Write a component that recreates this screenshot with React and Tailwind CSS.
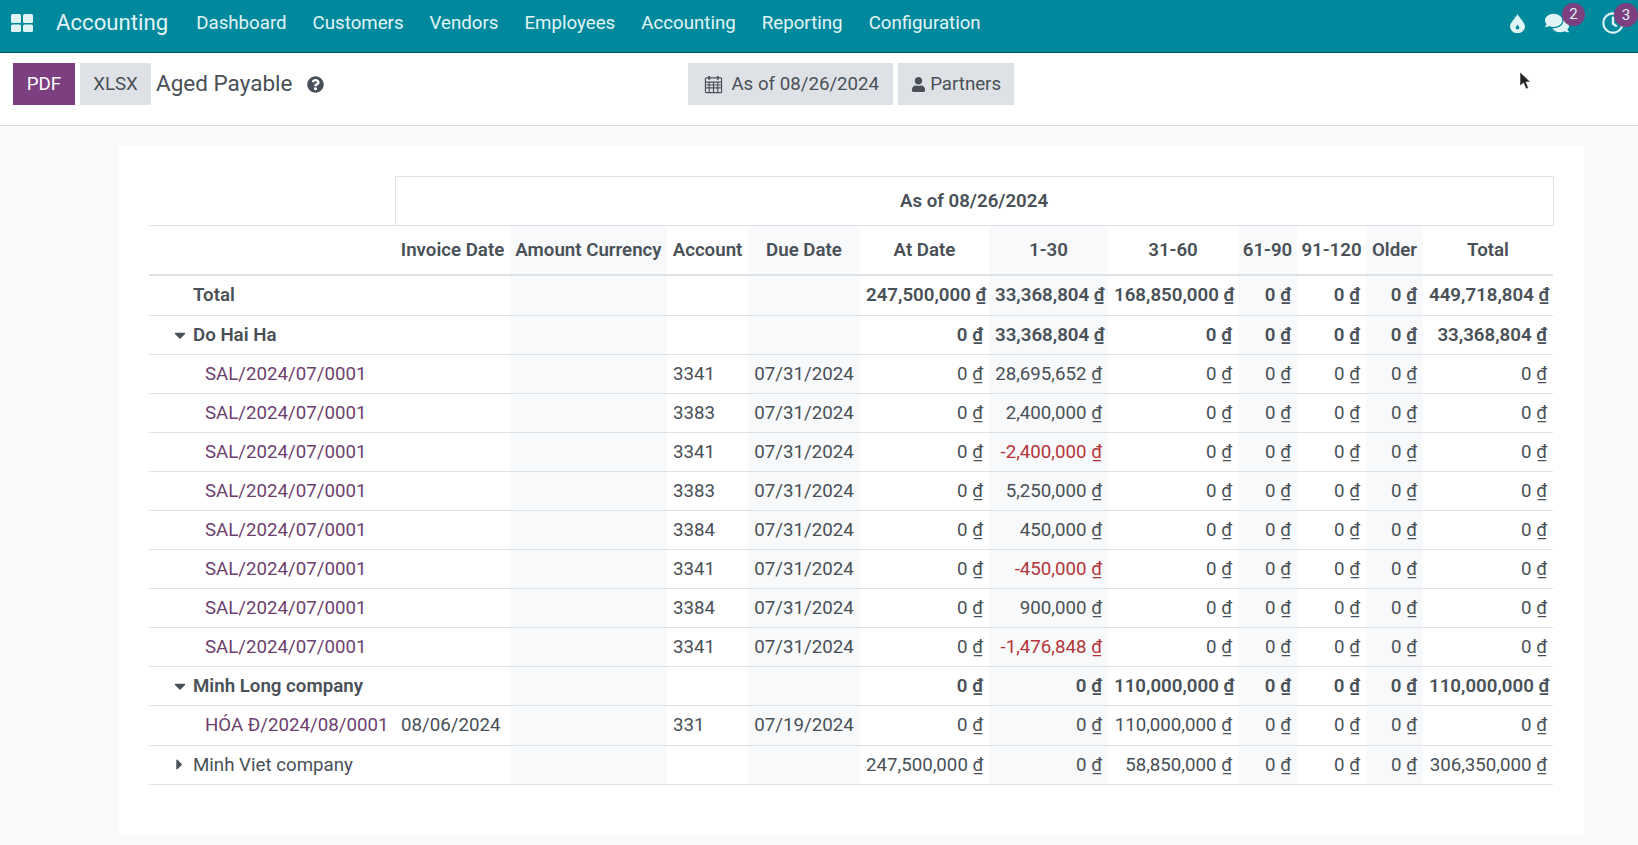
import React from "react";
import { FaComments, FaRegClock, FaUser, FaQuestionCircle, FaCaretDown, FaCaretRight } from "react-icons/fa";

const menu = ["Dashboard", "Customers", "Vendors", "Employees", "Accounting", "Reporting", "Configuration"];

const columns = ["Invoice Date", "Amount Currency", "Account", "Due Date", "At Date", "1-30", "31-60", "61-90", "91-120", "Older", "Total"];

const shaded = [false, true, false, true, false, true, false, true, false, true, false];

const sal = (account, value, negative) => ({ name: "SAL/2024/07/0001", account, due: "07/31/2024", value, negative });

const saleLines = [
  sal("3341", "28,695,652"),
  sal("3383", "2,400,000"),
  sal("3341", "-2,400,000", true),
  sal("3383", "5,250,000"),
  sal("3384", "450,000"),
  sal("3341", "-450,000", true),
  sal("3384", "900,000"),
  sal("3341", "-1,476,848", true),
];

// one money cell
const Money = ({ value, shade, bold, red }) => (
  <td
    className={`border-b border-[#dee2e6] px-[6px] text-right whitespace-nowrap ${shade ? "bg-[#f8f9fa]" : ""} ${bold ? "font-semibold" : ""} ${red ? "text-[#b5343a]" : ""}`}
  >
    {value} <span className="underline">₫</span>
  </td>
);

const Blank = ({ shade }) => <td className={`border-b border-[#dee2e6] px-[6px] ${shade ? "bg-[#f8f9fa]" : ""}`}></td>;

const TextCell = ({ children }) => <td className="border-b border-[#dee2e6] px-[6px] whitespace-nowrap">{children}</td>;

const SummaryRow = ({ label, open, bold, values, tall }) => (
  <tr className={tall ? "h-[40.5px]" : "h-[39.1px]"}>
    <td className={`border-b border-[#dee2e6] px-[6px] whitespace-nowrap ${bold ? "font-semibold" : ""}`}>
      <div className="flex items-center pl-[18px]">
        <span className="flex w-[13px] justify-center">
          {open === true && <FaCaretDown className="h-[18px] w-[12px]" />}
          {open === false && <FaCaretRight className="h-[17px] w-[7px]" />}
        </span>
        <span className="ml-[7px]">{label}</span>
      </div>
    </td>
    <Blank />
    <Blank shade />
    <Blank />
    <Blank shade />
    {values.map((value, i) => (
      <Money key={i} value={value} shade={shaded[i + 4]} bold={bold} />
    ))}
  </tr>
);

const LineRow = ({ name, invoice, account, due, values, negative }) => (
  <tr className="h-[39.1px]">
    <td className="border-b border-[#dee2e6] pl-[56px] whitespace-nowrap text-[#6d3f6f]">{name}</td>
    <TextCell>{invoice}</TextCell>
    <Blank shade />
    <TextCell>{account}</TextCell>
    <td className="border-b border-[#dee2e6] bg-[#f8f9fa] px-[6px] text-center whitespace-nowrap">{due}</td>
    {values.map((value, i) => (
      <Money key={i} value={value} shade={shaded[i + 4]} red={i === 1 && negative} />
    ))}
  </tr>
);

const CalendarIcon = () => (
  <svg viewBox="0 0 20 20" className="h-[19px] w-[19px]" fill="none" stroke="currentColor" strokeWidth="1.2">
    <rect x="1.5" y="3" width="17" height="15.5" rx="1" />
    <path d="M1.5 7.5h17M1.5 10.5h17M1.5 13.5h17M5.5 7.5v11M10 7.5v11M14.5 7.5v11" />
    <path d="M5.5 1v4M14.5 1v4" strokeWidth="2" />
  </svg>
);

// odoo's debug/droplet icon, a drop with a small hole in it
const DropIcon = () => (
  <svg viewBox="0 0 15 19" className="h-[19px] w-[15px]">
    <path
      fillRule="evenodd"
      fill="currentColor"
      d="M7.5 0C9 3.5 15 8.5 15 12.5A7.3 6.5 0 0 1 0 12.5C0 8.5 6 3.5 7.5 0ZM7.5 10.5C6.8 11.8 5.7 12.6 5.7 13.8A1.8 1.8 0 0 0 9.3 13.8C9.3 12.6 8.2 11.8 7.5 10.5Z"
    />
  </svg>
);

export default function App() {
  return (
    <div className="relative flex h-[845px] w-[1638px] flex-col overflow-hidden bg-[#f8f9fa] font-['Roboto',sans-serif] text-[18.7px] text-[#495057]">
      {/* NAVBAR */}
      <nav className="flex h-[53px] shrink-0 items-center border-b border-[#00596a] bg-[#00899c] pb-[6px] text-[#e0f4f6]">
        <svg viewBox="0 0 22 18" className="ml-[11px] h-[18px] w-[22px]" fill="currentColor">
          <rect x="0" y="0" width="10" height="9" rx="1.5" />
          <rect x="12" y="0" width="10" height="9" rx="1.5" />
          <rect x="0" y="10.5" width="10" height="7.5" rx="1.5" />
          <rect x="12" y="10.5" width="10" height="7.5" rx="1.5" />
        </svg>
        <span className="ml-[23px] text-[22.2px]">Accounting</span>
        <div className="ml-[28px] flex gap-[26px]">
          {menu.map((item) => (
            <span key={item}>{item}</span>
          ))}
        </div>
        <div className="ml-auto flex items-center pr-[12px]">
          <DropIcon />
          <div className="relative ml-[20px]">
            <FaComments className="text-[24px]" />
            <span className="absolute -top-[8px] left-[17px] flex h-[23px] w-[23px] items-center justify-center rounded-full bg-[#7c3f80] text-[15px]">
              2
            </span>
          </div>
          <div className="relative ml-[33px] w-[24px]">
            <FaRegClock className="text-[22px]" />
            <span className="absolute -top-[9px] left-[12px] flex h-[24px] w-[24px] items-center justify-center rounded-full bg-[#7c3f80] text-[15px]">
              3
            </span>
          </div>
        </div>
      </nav>

      {/* CONTROL PANEL */}
      <div className="relative flex h-[73px] shrink-0 items-center border-b border-[#dcdcdc] bg-white pb-[10px]">
        <button className="ml-[13px] h-[42px] w-[62px] bg-[#7c4080] text-white">PDF</button>
        <button className="ml-[5px] h-[42px] w-[71px] bg-[#dee2e6]">XLSX</button>
        <span className="ml-[5px] text-[22.5px]">Aged Payable</span>
        <FaQuestionCircle className="ml-[15px] text-[17px] text-[#484f5a]" />
        <div className="ml-[364px] flex gap-[5px]">
          <button className="flex h-[42px] items-center gap-[8px] bg-[#dee2e6] pl-[16px] pr-[14px]">
            <CalendarIcon />
            As of 08/26/2024
          </button>
          <button className="flex h-[42px] items-center gap-[4px] bg-[#dee2e6] px-[13px]">
            <FaUser className="text-[15px]" />
            Partners
          </button>
        </div>
        {/* mouse pointer */}
        <svg viewBox="0 0 12 20" className="absolute left-[1519px] top-[18px] h-[20px] w-[12px]">
          <path d="M1 1v14l3.5-3 2.5 6 2.5-1-2.5-6h4.5z" fill="#222" stroke="#fff" strokeWidth="0.6" />
        </svg>
      </div>

      {/* REPORT CARD */}
      <div className="mx-[119px] mt-[20px] h-[689px] w-[1465px] bg-white px-[30px] pt-[30px]">
        <table className="w-[1404px] table-fixed border-collapse">
          <colgroup>
            <col className="w-[246px]" />
            <col className="w-[115px]" />
            <col className="w-[157px]" />
            <col className="w-[81px]" />
            <col className="w-[112px]" />
            <col className="w-[129px]" />
            <col className="w-[119px]" />
            <col className="w-[130px]" />
            <col className="w-[59px]" />
            <col className="w-[69px]" />
            <col className="w-[57px]" />
            <col className="w-[130px]" />
          </colgroup>
          <thead>
            <tr className="h-[49px]">
              <th className="border-b border-[#dee2e6]"></th>
              <th colSpan={11} className="border border-[#dee2e6] font-semibold">
                As of 08/26/2024
              </th>
            </tr>
            <tr className="h-[49px]">
              <th className="border-b-2 border-[#dee2e6]"></th>
              {columns.map((col, i) => (
                <th
                  key={col}
                  className={`border-b-2 border-[#dee2e6] font-semibold whitespace-nowrap ${shaded[i] ? "bg-[#f8f9fa]" : ""}`}
                >
                  {col}
                </th>
              ))}
            </tr>
          </thead>
          <tbody>
            <SummaryRow
              label="Total"
              bold
              tall
              values={["247,500,000", "33,368,804", "168,850,000", "0", "0", "0", "449,718,804"]}
            />
            <SummaryRow
              label="Do Hai Ha"
              open
              bold
              values={["0", "33,368,804", "0", "0", "0", "0", "33,368,804"]}
            />
            {saleLines.map((line, i) => (
              <LineRow
                key={i}
                name={line.name}
                account={line.account}
                due={line.due}
                negative={line.negative}
                values={["0", line.value, "0", "0", "0", "0", "0"]}
              />
            ))}
            <SummaryRow
              label="Minh Long company"
              open
              bold
              values={["0", "0", "110,000,000", "0", "0", "0", "110,000,000"]}
            />
            <LineRow
              name="HÓA Đ/2024/08/0001"
              invoice="08/06/2024"
              account="331"
              due="07/19/2024"
              values={["0", "0", "110,000,000", "0", "0", "0", "0"]}
            />
            <SummaryRow
              label="Minh Viet company"
              open={false}
              values={["247,500,000", "0", "58,850,000", "0", "0", "0", "306,350,000"]}
            />
          </tbody>
        </table>
      </div>
    </div>
  );
}
